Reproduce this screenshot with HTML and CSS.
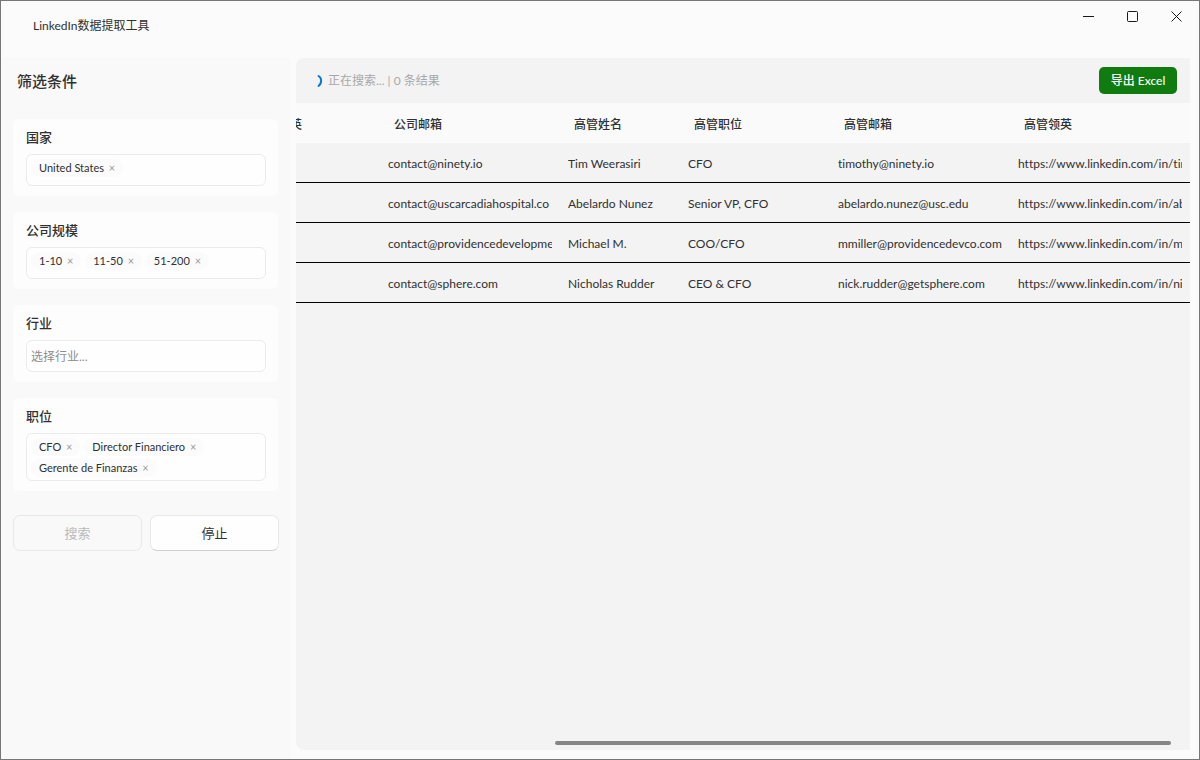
FILE: index.html
```html
<!DOCTYPE html>
<html lang="zh-CN">
<head>
<meta charset="utf-8">
<title>LinkedIn数据提取工具</title>
<link rel="stylesheet" href="styles.css">
</head>
<body>
<div class="window">
  <header class="titlebar">
    <h1 class="app-title">LinkedIn数据提取工具</h1>
    <div class="window-controls">
      <button class="window-button" type="button" aria-label="最小化"><svg width="12" height="12" viewBox="0 0 12 12"><path d="M0 5.500h11"/></svg></button>
      <button class="window-button" type="button" aria-label="最大化"><svg width="12" height="12" viewBox="0 0 12 12"><rect x=".5" y=".5" width="10" height="10" rx="1"/></svg></button>
      <button class="window-button" type="button" aria-label="关闭"><svg width="12" height="12" viewBox="0 0 12 12"><path d="M.5.5l10 10M10.500.5l-10 10"/></svg></button>
    </div>
  </header>
  <div class="content">
    <aside class="sidebar">
      <h2 class="sidebar-title">筛选条件</h2>
      <div class="filters">
        <section class="card">
          <h3 class="card-title" id="country">国家</h3>
          <div class="tag-box" role="group" aria-labelledby="country">
            <span class="tag">United States<button class="tag-remove" type="button">×</button></span>
          </div>
        </section>
        <section class="card">
          <h3 class="card-title" id="size">公司规模</h3>
          <div class="tag-box" role="group" aria-labelledby="size">
            <span class="tag">1-10<button class="tag-remove" type="button">×</button></span>
            <span class="tag">11-50<button class="tag-remove" type="button">×</button></span>
            <span class="tag">51-200<button class="tag-remove" type="button">×</button></span>
          </div>
        </section>
        <section class="card">
          <label class="card-title" for="industry">行业</label>
          <input class="text-input" id="industry" type="text" placeholder="选择行业...">
        </section>
        <section class="card">
          <h3 class="card-title" id="job">职位</h3>
          <div class="tag-box" role="group" aria-labelledby="job">
            <span class="tag">CFO<button class="tag-remove" type="button">×</button></span>
            <span class="tag">Director Financiero<button class="tag-remove" type="button">×</button></span>
            <span class="tag">Gerente de Finanzas<button class="tag-remove" type="button">×</button></span>
          </div>
        </section>
      </div>
      <div class="actions">
        <button class="action" type="button" disabled>搜索</button>
        <button class="action" type="button">停止</button>
      </div>
    </aside>
    <main class="results">
      <div class="toolbar">
        <div class="status">
          <svg class="spinner" width="8" height="14" viewBox="0 0 8 14"><path d="M2.500 2C6 4 6 9.500 2.500 12"/></svg>
          <span>正在搜索... | 0 条结果</span>
        </div>
        <button class="export" type="button">导出 Excel</button>
      </div>
      <div class="table-view">
        <table class="table">
          <colgroup><col class="col-company"><col class="col-wide"><col class="col-name"><col class="col-role"><col class="col-wide"><col class="col-wide"></colgroup>
          <thead>
            <tr><th>公司领英</th><th>公司邮箱</th><th>高管姓名</th><th>高管职位</th><th>高管邮箱</th><th>高管领英</th></tr>
          </thead>
          <tbody>
            <tr><td></td><td><div class="cell">contact@ninety.io</div></td><td><div class="cell">Tim Weerasiri</div></td><td><div class="cell">CFO</div></td><td><div class="cell">timothy@ninety.io</div></td><td><div class="cell">https://www.linkedin.com/in/tim</div></td></tr>
            <tr><td></td><td><div class="cell">contact@uscarcadiahospital.co</div></td><td><div class="cell">Abelardo Nunez</div></td><td><div class="cell">Senior VP, CFO</div></td><td><div class="cell">abelardo.nunez@usc.edu</div></td><td><div class="cell">https://www.linkedin.com/in/ab</div></td></tr>
            <tr><td></td><td><div class="cell">contact@providencedevelopme</div></td><td><div class="cell">Michael M.</div></td><td><div class="cell">COO/CFO</div></td><td><div class="cell">mmiller@providencedevco.com</div></td><td><div class="cell">https://www.linkedin.com/in/m</div></td></tr>
            <tr><td></td><td><div class="cell">contact@sphere.com</div></td><td><div class="cell">Nicholas Rudder</div></td><td><div class="cell">CEO &amp; CFO</div></td><td><div class="cell">nick.rudder@getsphere.com</div></td><td><div class="cell">https://www.linkedin.com/in/ni</div></td></tr>
          </tbody>
        </table>
      </div>
      <div class="scrollbar"><div class="scrollbar-thumb"></div></div>
    </main>
  </div>
</div>
</body>
</html>
```
FILE: styles.css
```css
* { box-sizing: border-box; }

body {
  margin: 0;
  background: #fbfbfb;
  color: #303030;
  font: 12px/18px Lato, "Noto Sans CJK SC", sans-serif;
  font-variant-ligatures: none;
}

button, input {
  margin: 0;
  padding: 0;
  border: 0;
  background: none;
  color: inherit;
  font: inherit;
}

h1, h2, h3 { margin: 0; }

.window {
  display: flex;
  flex-direction: column;
  min-height: 100vh;
  border: 1px solid #777;
}

.titlebar {
  display: flex;
  justify-content: space-between;
  height: 56px;
  padding-left: 32px;
}

.app-title {
  padding-top: 16px;
  font-size: 12px;
  font-weight: 400;
}

.window-controls { display: flex; }

.window-button {
  display: flex;
  align-items: center;
  justify-content: center;
  width: 44px;
  height: 32px;
}

.window-button svg {
  fill: none;
  stroke: #1a1a1a;
  stroke-width: 1;
}

.content {
  display: flex;
  flex: 1;
  gap: 5px;
  padding-right: 9px;
}

.sidebar {
  flex: 0 0 290px;
  padding: 12px;
  border-radius: 0 8px 0 0;
  background: #f9f9f9;
}

.sidebar-title {
  padding-left: 4px;
  font-size: 15px;
  font-weight: 500;
  line-height: 24px;
}

.filters {
  display: grid;
  gap: 16px;
  margin-top: 26px;
}

.card {
  width: 265px;
  padding: 8px 12px 10px 13px;
  border-radius: 6px;
  background: #fdfdfd;
}

.card-title {
  display: block;
  margin-bottom: 7px;
  font-size: 13px;
  font-weight: 500;
  line-height: 20px;
}

.tag-box,
.text-input {
  width: 100%;
  min-height: 32px;
  border: 1px solid #ebebeb;
  border-radius: 6px;
  background: #fefefe;
}

.tag-box {
  display: flex;
  flex-wrap: wrap;
  align-content: flex-start;
  gap: 3px 4px;
  padding: 4px 4px 3px;
}

.text-input {
  display: block;
  padding: 2px 4px 0;
}

.text-input::placeholder { color: #8c8c8c; opacity: 1; }

.tag {
  display: flex;
  gap: 4px;
  height: 18px;
  padding: 0 7px 0 8px;
  border-radius: 9px;
  background: #fbfbfb;
  font-size: 11px;
}

.tag-remove {
  width: 8px;
  color: #999;
  line-height: 18px;
}

.actions {
  display: grid;
  grid-template-columns: 1fr 1fr;
  gap: 8px;
  width: 266px;
  margin-top: 24px;
}

.action {
  height: 36px;
  border: 1px solid #e8e8e8;
  border-bottom-color: #d0d0d0;
  border-radius: 7px;
  background: #fefefe;
  font-size: 13px;
}

.action:disabled {
  border-color: #e8e8e8;
  background: #f9f9f9;
  color: #bababa;
}

.results {
  display: flex;
  flex: 1;
  flex-direction: column;
  min-width: 0;
  margin: 1px 0 9px;
  border-radius: 8px 0 0 8px;
  background: #f3f3f3;
}

.toolbar {
  display: flex;
  align-items: center;
  justify-content: space-between;
  height: 45px;
  padding: 0 13px 0 20px;
}

.status {
  display: flex;
  align-items: center;
  gap: 4px;
  color: #a8a8a8;
}

.spinner {
  fill: none;
  stroke: #0a78d0;
  stroke-width: 2;
  stroke-linecap: round;
}

.export {
  width: 78px;
  height: 27px;
  border-radius: 5px;
  background: #107c10;
  color: #fff;
  font-weight: 500;
}

.table-view {
  display: flex;
  flex: 1;
  align-items: flex-start;
  justify-content: flex-end;
  overflow: hidden;
}

.table {
  flex: none;
  width: 950px;
  border-collapse: separate;
  border-spacing: 0;
  table-layout: fixed;
}

.col-company { width: 140px; }
.col-wide { width: 180px; }
.col-name { width: 120px; }
.col-role { width: 150px; }

.table th {
  height: 40px;
  padding: 3px 14px 0;
  background: #fafafa;
  font-weight: 500;
  text-align: left;
}

.table td {
  height: 40px;
  padding: 2px 8px 0;
  border-bottom: 1px solid #000;
}

.cell {
  overflow: hidden;
  white-space: nowrap;
}

.scrollbar {
  display: flex;
  justify-content: flex-end;
  padding: 0 19px 5px 7px;
}

.scrollbar-thumb {
  width: 71%;
  height: 4px;
  border-radius: 2px;
  background: #868686;
}
```
